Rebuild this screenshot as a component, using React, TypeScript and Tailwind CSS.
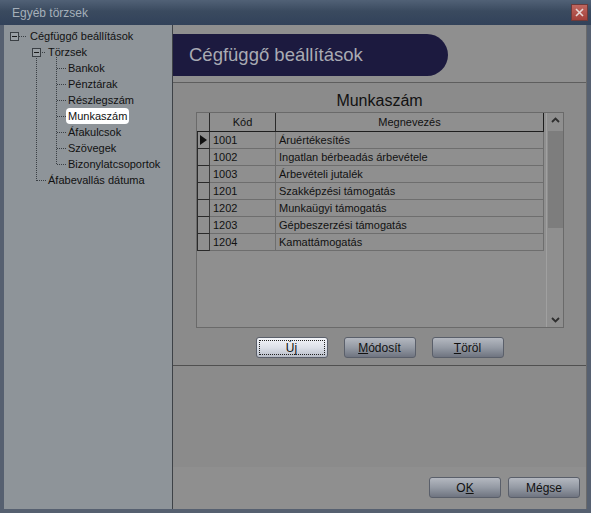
const rows = [
  { code: "1001", name: "Áruértékesítés" },
  { code: "1002", name: "Ingatlan bérbeadás árbevétele" },
  { code: "1003", name: "Árbevételi jutalék" },
  { code: "1201", name: "Szakképzési támogatás" },
  { code: "1202", name: "Munkaügyi támogatás" },
  { code: "1203", name: "Gépbeszerzési támogatás" },
  { code: "1204", name: "Kamattámogatás" },
];

const children = [
  "Bankok",
  "Pénztárak",
  "Részlegszám",
  "Munkaszám",
  "Áfakulcsok",
  "Szövegek",
  "Bizonylatcsoportok",
];

function TreeLines() {
  return (
    <svg className="pointer-events-none absolute left-0 top-0" width="168" height="200">
      <g stroke="#3a3f44" strokeWidth="1" strokeDasharray="1 1" fill="none">
        <line x1="15" y1="11.5" x2="22" y2="11.5" />
        <line x1="32.5" y1="33" x2="32.5" y2="156" />
        <line x1="33" y1="155.5" x2="42" y2="155.5" />
        <line x1="38" y1="27.5" x2="42" y2="27.5" />
        <line x1="52.5" y1="32" x2="52.5" y2="140" />
        {children.map((_, i) => (
          <line key={i} x1="53" y1={43.5 + i * 16} x2="62" y2={43.5 + i * 16} />
        ))}
      </g>
      <g stroke="#3a3f44" fill="#9aa0a5">
        <rect x="6.5" y="7.5" width="8" height="8" />
        <rect x="28.5" y="23.5" width="8" height="8" />
      </g>
      <g stroke="#1a1a1a">
        <line x1="8" y1="11.5" x2="13" y2="11.5" />
        <line x1="30" y1="27.5" x2="35" y2="27.5" />
      </g>
    </svg>
  );
}

function Btn({ label, focus }: { label: React.ReactNode; focus?: boolean }) {
  return (
    <div
      className={
        focus
          ? "flex h-[21px] w-[72px] items-center justify-center rounded-[3px] border border-[#5a5f6a] bg-[linear-gradient(180deg,#f3f5f9_0%,#dde1e9_50%,#b8bdc8_100%)] p-[2px]"
          : "flex h-[21px] w-[72px] items-center justify-center rounded-[3px] border border-[#5a5f6a] bg-[linear-gradient(180deg,#b4b8c0_0%,#949aa4_50%,#6f7480_100%)]"
      }
    >
      <div
        className={
          focus
            ? "flex h-full w-full items-center justify-center border border-dotted border-[#222]"
            : "flex h-full w-full items-center justify-center"
        }
      >
        <span className="text-[12px] leading-none text-[#111]">{label}</span>
      </div>
    </div>
  );
}

export default function App() {
  return (
    <div className="flex h-[513px] w-[591px] flex-col bg-[#566070] font-['Liberation_Sans',Arial,sans-serif] text-[11px] text-[#111]">
      {/* title bar */}
      <div className="flex h-[25px] items-center justify-between bg-[linear-gradient(180deg,#516176_0%,#3a4a5f_45%,#32425a_100%)] pl-[12px] pr-[3px]">
        <span className="text-[12px] text-[#a6b0ba]">Egyéb törzsek</span>
        <div className="flex h-[17px] w-[17px] items-center justify-center border border-[#6d3a3a] bg-[linear-gradient(180deg,#c0675f_0%,#a3403a_100%)]">
          <svg width="9" height="9" viewBox="0 0 9 9">
            <path d="M1 1 L8 8 M8 1 L1 8" stroke="#e8d8d6" strokeWidth="1.6" />
          </svg>
        </div>
      </div>

      <div className="flex flex-1 px-[4px] pb-[4px]">
        {/* tree */}
        <div className="relative w-[169px] border-r border-[#3e4247] bg-[#8e9499] pt-[3px]">
          <TreeLines />
          <div className="flex h-[16px] items-center pl-[26px]">Cégfüggő beállítások</div>
          <div className="flex h-[16px] items-center pl-[44px]">Törzsek</div>
          {children.map((c) => (
            <div key={c} className="flex h-[16px] items-center pl-[62px]">
              {c === "Munkaszám" ? (
                <span className="rounded-[4px] bg-white px-[2px] leading-[16px]">{c}</span>
              ) : (
                <span className="pl-[2px]">{c}</span>
              )}
            </div>
          ))}
          <div className="flex h-[16px] items-center pl-[44px]">Áfabevallás dátuma</div>
        </div>

        {/* right side */}
        <div className="flex flex-1 flex-col border-r border-[#6b6b6b] bg-[#8c8c8c]">
          <div className="h-[58px] border-b border-[#5e5e5e] bg-[#8f8f8f] pt-[9px]">
            <div className="flex h-[42px] w-[275px] items-center rounded-r-[21px] bg-[#1c1a3f] pl-[16px]">
              <span className="text-[18.5px] text-[#a9abb3]">Cégfüggő beállítások</span>
            </div>
          </div>

          <div className="flex h-[283px] flex-col border-b border-[#505050] bg-[#8b8b8b] pt-[8px]">
            <div className="h-[20px] text-center text-[16px] leading-[20px] text-[#111]">Munkaszám</div>
            <div className="ml-[23px] mt-[1px] flex h-[216px] w-[368px] border border-[#6a6a6a] bg-[#8f8f8f]">
              <div className="flex w-[347px] flex-col">
                <div className="flex h-[19px] border-b border-[#1e1e1e]">
                  <div className="w-[13px] border-r border-[#2a2a2a]" />
                  <div className="flex w-[66px] items-center justify-center border-r border-[#2a2a2a]">Kód</div>
                  <div className="flex w-[268px] items-center justify-center border-r border-[#1e1e1e]">Megnevezés</div>
                </div>
                {rows.map((r, i) => (
                  <div key={r.code} className="flex h-[17px]">
                    <div className="flex w-[13px] items-center justify-center border-b border-l border-r border-b-[#2a2a2a] border-l-[#2a2a2a] border-r-[#3a3a3a]">
                      {i === 0 ? (
                        <svg width="7" height="10" viewBox="0 0 7 10">
                          <path d="M0 0 L7 5 L0 10 Z" fill="#111" />
                        </svg>
                      ) : null}
                    </div>
                    <div className="flex w-[66px] items-center border-b border-r border-[#6e6e6e] pl-[3px]">{r.code}</div>
                    <div className="flex w-[268px] items-center border-b border-r border-[#6e6e6e] pl-[3px]">{r.name}</div>
                  </div>
                ))}
              </div>
              <div className="ml-[2px] flex w-[17px] flex-col items-center border-l border-[#a0a0a0] py-[4px]">
                <svg width="9" height="6" viewBox="0 0 9 6">
                  <path d="M1 5 L4.5 1.5 L8 5" stroke="#2e2e2e" strokeWidth="1.8" fill="none" />
                </svg>
                <div className="mt-[8px] h-[97px] w-[15px] bg-[#7d7d7d]" />
                <div className="flex-1" />
                <svg width="9" height="6" viewBox="0 0 9 6">
                  <path d="M1 1 L4.5 4.5 L8 1" stroke="#2e2e2e" strokeWidth="1.8" fill="none" />
                </svg>
              </div>
            </div>
            <div className="mt-[9px] flex justify-center gap-[16px]">
              <Btn focus label={<>Ú<span className="underline">j</span></>} />
              <Btn label={<><span className="underline">M</span>ódosít</>} />
              <Btn label={<><span className="underline">T</span>öröl</>} />
            </div>
          </div>

          <div className="flex flex-1 flex-col">
            <div className="flex-1 bg-[#8b8b8b]" />
            <div className="flex h-[42px] items-start justify-end gap-[7px] bg-[#8f8f8f] pr-[6px] pt-[10px]">
              <Btn label={<>O<span className="underline">K</span></>} />
              <Btn label="Mégse" />
            </div>
          </div>
        </div>
      </div>
    </div>
  );
}
